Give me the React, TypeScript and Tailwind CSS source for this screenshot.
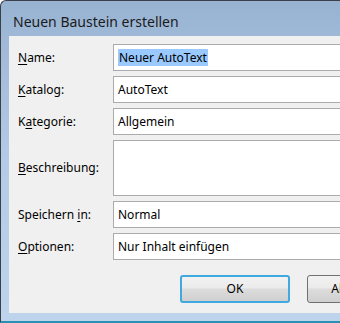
import React from "react";

const font = { fontFamily: '"Segoe UI", "Noto Sans", "Open Sans", sans-serif' };

function U({ children }: { children: React.ReactNode }) {
  return <span className="underline underline-offset-[2px] decoration-1">{children}</span>;
}

function Row({ label, h, children }: { label: React.ReactNode; h: number; children?: React.ReactNode }) {
  return (
    <div className="flex items-center" style={{ height: h }}>
      <div className="w-[104px] shrink-0 pl-[9px] text-[12px] text-black whitespace-nowrap">{label}</div>
      <div className="h-full w-[260px] shrink-0 border border-[#ababab] bg-white flex items-center pl-[4px] text-[12px] text-black">
        {children}
      </div>
    </div>
  );
}

export default function App() {
  return (
    <div className="w-[340px] h-[323px] overflow-hidden bg-white" style={font}>
      <div className="w-[360px] h-[323px] flex flex-col rounded-tl-[6px] border-l border-t border-[#3a3f48] border-b-2 border-b-[#2a8fb0] bg-gradient-to-b from-[#98b3d2] via-[#b3cbe6] to-[#bdd4ec]">
        <div className="h-[35px] flex items-center pl-[12px] pt-[6px] text-[14px] text-[#1b1b1b]">
          Neuen Baustein erstellen
        </div>
        <div className="ml-[8px] mb-[8px] flex-1 bg-[#f0f0f0] flex flex-col pt-[8px] gap-[5px] overflow-hidden">
          <Row label={<><U>N</U>ame:</>} h={27}>
            <span className="bg-[#99c9ff] px-[1px] leading-[17px]">Neuer AutoText</span>
          </Row>
          <Row label={<><U>K</U>atalog:</>} h={27}>AutoText</Row>
          <Row label={<>K<U>a</U>tegorie:</>} h={27}>Allgemein</Row>
          <Row label={<><U>B</U>eschreibung:</>} h={56} />
          <Row label={<>Speichern <U>i</U>n:</>} h={27}>Normal</Row>
          <Row label={<><U>O</U>ptionen:</>} h={27}>Nur Inhalt einfügen</Row>
          <div className="flex mt-[10px] pl-[171px] gap-[17px]">
            <div className="w-[110px] h-[28px] shrink-0 rounded-[3px] border-2 border-[#3fa9e0] bg-[linear-gradient(to_bottom,#f2f2f2_0%,#ebebeb_45%,#dddddd_50%,#cfcfcf_100%)] flex items-center justify-center text-[12px] text-black">
              OK
            </div>
            <div className="w-[110px] h-[28px] shrink-0 rounded-[3px] border border-[#707070] bg-[linear-gradient(to_bottom,#f2f2f2_0%,#ebebeb_45%,#dddddd_50%,#cfcfcf_100%)] flex items-center justify-center text-[12px] text-black">
              Abbrechen
            </div>
          </div>
        </div>
      </div>
    </div>
  );
}
